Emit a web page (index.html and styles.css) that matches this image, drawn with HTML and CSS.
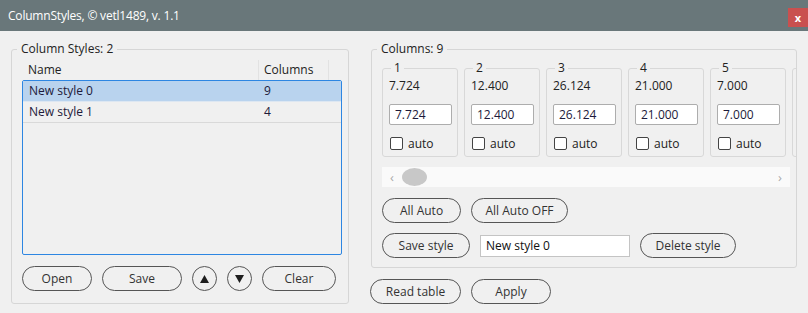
FILE: index.html
```html
<!DOCTYPE html>
<html lang="en">
<head>
    <meta charset="UTF-8">
    <title>ColumnStyles</title>
    <link rel="stylesheet" href="styles.css">
</head>
<body>
    <div class="titlebar">
        <span class="title">ColumnStyles, © vetl1489, v. 1.1</span>
        <button class="close">x</button>
    </div>
    <div class="content">
        <fieldset class="group styles-group">
            <legend>Column Styles: 2</legend>
            <div class="list-head">
                <span class="cell-name">Name</span>
                <span class="cell-count">Columns</span>
            </div>
            <div class="list">
                <div class="row selected">
                    <span class="cell-name">New style 0</span>
                    <span class="cell-count">9</span>
                </div>
                <div class="row">
                    <span class="cell-name">New style 1</span>
                    <span class="cell-count">4</span>
                </div>
            </div>
            <div class="btn-row">
                <button class="btn w70">Open</button>
                <button class="btn w80">Save</button>
                <button class="btn round"><svg width="9" height="8" viewBox="0 0 9 8"><polygon points="4.5,0 9,8 0,8" fill="#1e1e1e"/></svg></button>
                <button class="btn round"><svg width="9" height="8" viewBox="0 0 9 8"><polygon points="0,0 9,0 4.5,8" fill="#1e1e1e"/></svg></button>
                <button class="btn w74">Clear</button>
            </div>
        </fieldset>

        <div class="right">
            <fieldset class="group columns-group">
                <legend>Columns: 9</legend>
                <div class="cards">
                    <fieldset class="card">
                        <legend>1</legend>
                        <div class="value">7.724</div>
                        <input class="num" type="text" value="7.724">
                        <label class="check"><input type="checkbox"> auto</label>
                    </fieldset>
                    <fieldset class="card">
                        <legend>2</legend>
                        <div class="value">12.400</div>
                        <input class="num" type="text" value="12.400">
                        <label class="check"><input type="checkbox"> auto</label>
                    </fieldset>
                    <fieldset class="card">
                        <legend>3</legend>
                        <div class="value">26.124</div>
                        <input class="num" type="text" value="26.124">
                        <label class="check"><input type="checkbox"> auto</label>
                    </fieldset>
                    <fieldset class="card">
                        <legend>4</legend>
                        <div class="value">21.000</div>
                        <input class="num" type="text" value="21.000">
                        <label class="check"><input type="checkbox"> auto</label>
                    </fieldset>
                    <fieldset class="card">
                        <legend>5</legend>
                        <div class="value">7.000</div>
                        <input class="num" type="text" value="7.000">
                        <label class="check"><input type="checkbox"> auto</label>
                    </fieldset>
                    <div class="card card-edge"></div>
                </div>
                <div class="hscroll">
                    <span class="arrow">&#8249;</span>
                    <span class="thumb"></span>
                    <span class="arrow">&#8250;</span>
                </div>
                <div class="btn-row">
                    <button class="btn w79">All Auto</button>
                    <button class="btn w97">All Auto OFF</button>
                </div>
                <div class="btn-row style-row">
                    <button class="btn w88">Save style</button>
                    <input class="style-name" type="text" value="New style 0">
                    <button class="btn w96">Delete style</button>
                </div>
            </fieldset>
            <div class="btn-row bottom-row">
                <button class="btn w91">Read table</button>
                <button class="btn w80">Apply</button>
            </div>
        </div>
    </div>
</body>
</html>
```

FILE: styles.css
```css
body {
    margin: 0;
    background-color: #f0f0f0;
    font-family: "Open Sans", "Noto Sans", sans-serif;
    font-size: 12px;
    color: #222;
}

.titlebar {
    height: 31px;
    background-color: #69777a;
    display: flex;
    justify-content: space-between;
}

.title {
    color: #fff;
    line-height: 31px;
    padding-left: 8px;
    letter-spacing: -0.2px;
}

.close {
    margin-top: 8px;
    width: 20px;
    height: 19px;
    padding: 0;
    border: none;
    background-color: #c9504f;
    color: #fff;
    font-family: inherit;
    font-size: 11px;
    font-weight: bold;
    line-height: 17px;
}

.content {
    display: flex;
    padding: 10px 0 0 11px;
}

.group {
    margin: 0;
    border: 1px solid #d6d6d6;
    border-radius: 3px;
    min-width: 0;
}

.group > legend {
    padding: 0 4px;
    margin-left: -5px;
    line-height: 16px;
}

/* left: styles list */
.styles-group {
    width: 338px;
    box-sizing: border-box;
    padding: 3px 6px 9px 10px;
}

.list-head {
    display: flex;
    height: 20px;
    line-height: 19px;
}

.list-head .cell-name {
    width: 230px;
    padding-left: 6px;
    border-right: 1px solid #e2e2e2;
}

.list-head .cell-count {
    width: 64px;
    padding-left: 5px;
    border-right: 1px solid #e2e2e2;
}

.list {
    height: 175px;
    box-sizing: border-box;
    border: 1px solid #2d86e2;
    border-radius: 2px;
}

.row {
    display: flex;
    height: 20px;
    line-height: 19px;
    border-bottom: 1px solid #d9d9d9;
    color: #1d1a3a;
}

.row.selected {
    background-color: #b9d3ee;
    border-bottom-color: #dde7f2;
}

.row .cell-name {
    width: 229px;
    padding-left: 6px;
}

.row .cell-count {
    padding-left: 6px;
}

.btn-row {
    display: flex;
    gap: 10px;
    margin-top: 11px;
}

.btn {
    height: 25px;
    padding: 0;
    border: 1px solid #555;
    border-radius: 13px;
    background: transparent;
    font-family: inherit;
    font-size: 12px;
    color: #333;
}

.btn.round {
    width: 25px;
    border-radius: 50%;
    display: flex;
    align-items: center;
    justify-content: center;
}

.w70 { width: 70px; }
.w74 { width: 74px; }
.w79 { width: 79px; }
.w80 { width: 80px; }
.w88 { width: 88px; }
.w91 { width: 91px; }
.w96 { width: 96px; }
.w97 { width: 97px; }

/* right: columns */
.right {
    margin-left: 21px;
}

.columns-group {
    width: 426px;
    box-sizing: border-box;
    margin-left: 1px;
    padding: 3px 0 9px 10px;
}

.cards {
    display: flex;
    gap: 6px;
    width: 414px;
    overflow: hidden;
}

.card {
    flex-shrink: 0;
    width: 76px;
    box-sizing: border-box;
    margin: 0;
    padding: 2px 4px 4px 6px;
    border: 1px solid #d8d8d8;
    border-radius: 3px;
    min-width: 0;
}

.card-edge {
    margin-top: 8px;
    height: 89px;
}

.card legend {
    padding: 0 3px;
    margin-left: 2px;
    line-height: 16px;
}

.value {
    line-height: 16px;
}

.num {
    display: block;
    margin-top: 10px;
    width: 63px;
    height: 21px;
    box-sizing: border-box;
    padding: 0 5px;
    border: 1px solid #adadad;
    border-radius: 2px;
    background-color: #fff;
    font-family: inherit;
    font-size: 12px;
    color: #1d1a3a;
}

.check {
    display: flex;
    align-items: center;
    gap: 5px;
    margin-top: 10px;
    height: 16px;
}

.check input {
    appearance: none;
    margin: 0 0 0 1px;
    width: 13px;
    height: 13px;
    border: 1px solid #444;
    border-radius: 2px;
    background-color: #fff;
}

.hscroll {
    display: flex;
    align-items: center;
    width: 408px;
    height: 20px;
    margin-top: 10px;
    background-color: #fafafa;
    color: #aaa;
    font-size: 13px;
}

.hscroll .arrow {
    width: 20px;
    text-align: center;
}

.hscroll .arrow:last-child {
    margin-left: auto;
}

.thumb {
    width: 25px;
    height: 18px;
    border-radius: 50%;
    background-color: #c8c8c8;
}

.style-row {
    margin-top: 10px;
    align-items: center;
}

.style-name {
    width: 150px;
    height: 22px;
    box-sizing: border-box;
    padding: 0 5px;
    border: 1px solid #c4c4c4;
    background-color: #fff;
    font-family: inherit;
    font-size: 12px;
    color: #111;
}

.bottom-row {
    margin-top: 11px;
}
```
